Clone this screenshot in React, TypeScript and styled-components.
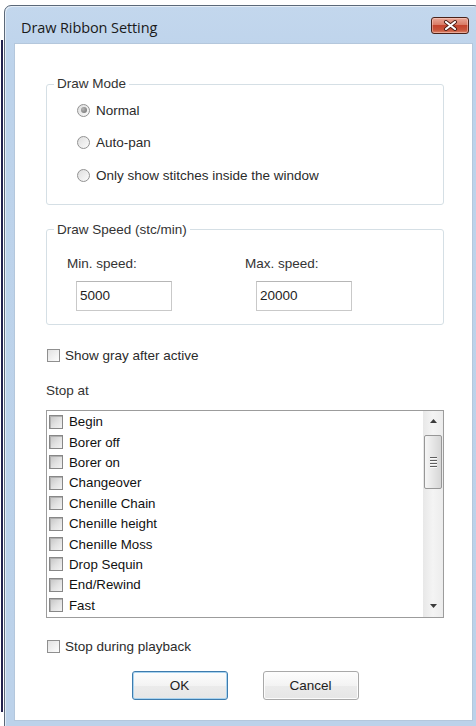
import * as React from 'react';
import styled, { createGlobalStyle } from 'styled-components';

const GlobalStyle = createGlobalStyle`
  html, body {
    margin: 0;
    padding: 0;
    background: #ffffff;
    overflow: hidden;
  }
  body {
    font-family: "Liberation Sans", Arial, sans-serif;
  }
`;

const Desktop = styled.div`
  display: flex;
  align-items: flex-start;
  width: 476px;
  height: 726px;
  overflow: hidden;
`;

// the edge of another window peeking out on the left
const BackEdge = styled.div`
  flex: 0 0 4px;
  align-self: stretch;
  margin: 40px 0 14px;
  background: linear-gradient(to right, transparent 1px, #22224e 1px, #22224e 3px, transparent 3px);
`;

const Window = styled.div`
  flex: 0 0 477px;
  box-sizing: border-box;
  margin-top: 5px;
  padding: 0 8px 8px 10px;
  border: 1px solid #5b6878;
  border-radius: 7px 7px 0 0;
  background: linear-gradient(#c3d7ed, #bdd3eb 60px, #bcd2ea);
  box-shadow: inset 1px 1px 0 rgba(255, 255, 255, 0.55);
`;

const TitleBar = styled.div`
  height: 38px;
  box-sizing: border-box;
  display: flex;
  align-items: flex-start;
  justify-content: space-between;
  padding: 11px 3px 0 6px;
`;

const Title = styled.div`
  margin-top: 1px;
  font-family: "Open Sans", "Liberation Sans", sans-serif;
  font-size: 14.5px;
  line-height: 20px;
  color: #1a1a1a;
  letter-spacing: -0.1px;
`;

const CloseButton = styled.div`
  width: 38px;
  height: 17px;
  box-sizing: border-box;
  display: flex;
  align-items: center;
  justify-content: center;
  border: 1px solid #4a2219;
  border-radius: 3px;
  background: linear-gradient(#eaa797, #d97c66 45%, #c4442d 50%, #c8553b 80%, #dc876c);
  box-shadow: inset 0 0 0 1px rgba(255, 220, 210, 0.45);
`;

const Client = styled.div`
  width: 457px;
  box-sizing: border-box;
  padding: 32px 28px 20px 31px;
  background: #ffffff;
  box-shadow: 0 0 0 1px #b4c7dc;
  font-size: 13.5px;
  color: #2b2b2b;
`;

const GroupBox = styled.fieldset<{ $gap?: number }>`
  margin: ${(p) => p.$gap ?? 0}px 0 0;
  padding: 0;
  min-inline-size: 0;
  border: 1px solid #d5dfe5;
  border-radius: 3px;
`;

const Legend = styled.legend`
  margin-left: 7px;
  padding: 0 3px;
  line-height: 16px;
  color: #333;
`;

const RadioList = styled.div`
  padding: 2px 0 12px 30px;
`;

const RadioRow = styled.label`
  display: flex;
  align-items: center;
  gap: 6px;
  height: 32.5px;
`;

const RadioMark = styled.span<{ $checked?: boolean }>`
  position: relative;
  width: 13px;
  height: 13px;
  box-sizing: border-box;
  border: 1px solid #929292;
  border-radius: 50%;
  background: linear-gradient(135deg, #dedede, #fbfbfb);
  &::after {
    content: '';
    display: ${(p) => (p.$checked ? 'block' : 'none')};
    position: absolute;
    left: 2.5px;
    top: 2.5px;
    width: 6px;
    height: 6px;
    border-radius: 50%;
    background: radial-gradient(circle at 35% 35%, #b5b5b5, #6e6e6e);
  }
`;

const SpeedGrid = styled.div`
  display: grid;
  grid-template-columns: 178px auto;
  padding: 18px 0 13px 20px;
`;

const SpeedField = styled.div`
  display: flex;
  flex-direction: column;
  align-items: flex-start;
`;

const FieldLabel = styled.div`
  line-height: 16px;
  color: #333;
`;

const NumberBox = styled.input<{ $indent: number }>`
  width: 96px;
  height: 30px;
  box-sizing: border-box;
  margin: 9px 0 0 ${(p) => p.$indent}px;
  padding: 0 3px;
  border: 1px solid #c9c9c9;
  border-top-color: #b6b6b6;
  font-family: inherit;
  font-size: 13.5px;
  color: #1e1e1e;
  background: #fff;
  outline: none;
`;

const CheckRow = styled.label<{ $gap: number }>`
  display: flex;
  align-items: center;
  gap: 5px;
  height: 16px;
  margin-top: ${(p) => p.$gap}px;
  padding-left: 1px;
`;

const CheckMark = styled.span`
  width: 13px;
  height: 13px;
  box-sizing: border-box;
  border: 1px solid #8f8f8f;
  background: linear-gradient(135deg, #e2e2e2, #fdfdfd);
`;

const SectionLabel = styled.div`
  margin-top: 19px;
  line-height: 16px;
  color: #333;
`;

const ListBox = styled.div`
  display: flex;
  margin-top: 11px;
  height: 208px;
  box-sizing: border-box;
  border: 1px solid #9c9c9c;
  background: #fff;
`;

const ListItems = styled.div`
  flex: 1;
  padding-top: 1px;
  overflow: hidden;
`;

const ListRow = styled.div`
  display: flex;
  align-items: center;
  gap: 6px;
  height: 20.4px;
  padding-left: 2px;
  font-size: 13.3px;
  color: #111;
`;

const ListCheck = styled.span`
  width: 14px;
  height: 14px;
  box-sizing: border-box;
  border: 1px solid #878787;
  background: linear-gradient(135deg, #c4c4c4, #e2e2e2 55%, #f2f2f2);
  box-shadow: inset 1px 1px 0 #b0b0b0;
`;

const ScrollBar = styled.div`
  display: flex;
  flex-direction: column;
  width: 20px;
  background: linear-gradient(to right, #e8e8e8, #f4f4f4 50%, #ececec);
`;

const ScrollArrow = styled.div`
  display: flex;
  align-items: center;
  justify-content: center;
  height: 21px;
`;

const ScrollTrack = styled.div`
  flex: 1;
  padding: 3px 1px 0 1px;
`;

const ScrollThumb = styled.div`
  height: 54px;
  box-sizing: border-box;
  display: flex;
  flex-direction: column;
  align-items: center;
  justify-content: center;
  gap: 2px;
  border: 1px solid #979797;
  border-radius: 2px;
  background: linear-gradient(to right, #f6f6f6, #e6e6e6 50%, #d6d6d6);
`;

const Grip = styled.span`
  width: 7px;
  height: 1px;
  background: #5e5e5e;
  box-shadow: 0 1px 0 #fafafa;
`;

const ButtonRow = styled.div`
  display: flex;
  justify-content: center;
  gap: 35px;
  margin-top: 16px;
`;

const DialogButton = styled.button<{ $default?: boolean }>`
  width: 96px;
  height: 29px;
  padding: 0;
  border: 1px solid ${(p) => (p.$default ? '#3d7bad' : '#a9a9a9')};
  border-radius: 3px;
  background: linear-gradient(#fdfdfd, #f3f3f3 50%, #ebebeb 51%, #e6e6e6);
  box-shadow: ${(p) => (p.$default ? 'inset 0 0 0 1px #a9d3ef' : 'inset 0 0 0 1px #fcfcfc')};
  font-family: inherit;
  font-size: 13.5px;
  color: #222;
`;

const stopEvents = [
  'Begin',
  'Borer off',
  'Borer on',
  'Changeover',
  'Chenille Chain',
  'Chenille height',
  'Chenille Moss',
  'Drop Sequin',
  'End/Rewind',
  'Fast',
];

const drawModes = ['Normal', 'Auto-pan', 'Only show stitches inside the window'];

const CloseGlyph = () => (
  <svg width="15" height="11" viewBox="0 0 15 11">
    <path d="M3 2 L12 9 M12 2 L3 9" stroke="#4b1c12" strokeWidth="4" strokeLinecap="round" />
    <path d="M3 2 L12 9 M12 2 L3 9" stroke="#ffffff" strokeWidth="2.2" strokeLinecap="round" />
  </svg>
);

const Triangle = ({ down }: { down?: boolean }) => (
  <svg width="7" height="4" viewBox="0 0 7 4">
    <path d={down ? 'M0 0 H7 L3.5 4 Z' : 'M0 4 H7 L3.5 0 Z'} fill="#3c3c3c" />
  </svg>
);

export default function App() {
  return (
    <>
      <GlobalStyle />
      <Desktop>
        <BackEdge />
        <Window>
          <TitleBar>
            <Title>Draw Ribbon Setting</Title>
            <CloseButton>
              <CloseGlyph />
            </CloseButton>
          </TitleBar>
          <Client>
            <GroupBox>
              <Legend>Draw Mode</Legend>
              <RadioList>
                {drawModes.map((mode, i) => (
                  <RadioRow key={mode}>
                    <RadioMark $checked={i === 0} />
                    {mode}
                  </RadioRow>
                ))}
              </RadioList>
            </GroupBox>

            <GroupBox $gap={17}>
              <Legend>Draw Speed (stc/min)</Legend>
              <SpeedGrid>
                <SpeedField>
                  <FieldLabel>Min. speed:</FieldLabel>
                  <NumberBox $indent={9} defaultValue="5000" readOnly />
                </SpeedField>
                <SpeedField>
                  <FieldLabel>Max. speed:</FieldLabel>
                  <NumberBox $indent={11} defaultValue="20000" readOnly />
                </SpeedField>
              </SpeedGrid>
            </GroupBox>

            <CheckRow $gap={23}>
              <CheckMark />
              Show gray after active
            </CheckRow>

            <SectionLabel>Stop at</SectionLabel>
            <ListBox>
              <ListItems>
                {stopEvents.map((name) => (
                  <ListRow key={name}>
                    <ListCheck />
                    {name}
                  </ListRow>
                ))}
              </ListItems>
              <ScrollBar>
                <ScrollArrow>
                  <Triangle />
                </ScrollArrow>
                <ScrollTrack>
                  <ScrollThumb>
                    <Grip />
                    <Grip />
                    <Grip />
                    <Grip />
                  </ScrollThumb>
                </ScrollTrack>
                <ScrollArrow>
                  <Triangle down />
                </ScrollArrow>
              </ScrollBar>
            </ListBox>

            <CheckRow $gap={21}>
              <CheckMark />
              Stop during playback
            </CheckRow>

            <ButtonRow>
              <DialogButton $default>OK</DialogButton>
              <DialogButton>Cancel</DialogButton>
            </ButtonRow>
          </Client>
        </Window>
      </Desktop>
    </>
  );
}
